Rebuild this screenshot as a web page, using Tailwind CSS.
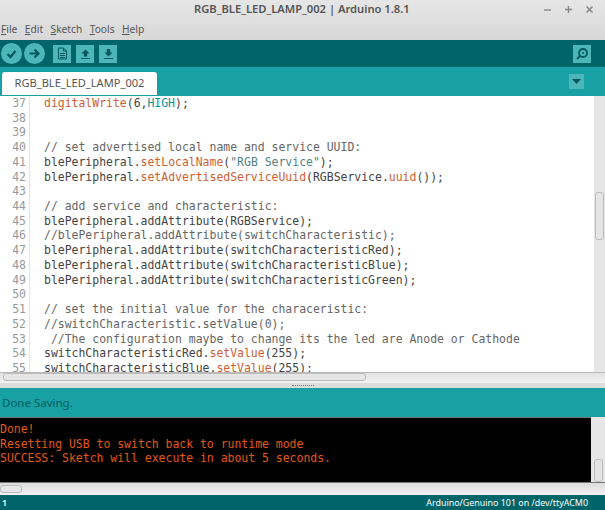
<!DOCTYPE html>
<html lang="en">
<head>
<meta charset="UTF-8">
<title>RGB_BLE_LED_LAMP_002 | Arduino 1.8.1</title>
<script src="https://cdn.jsdelivr.net/npm/@tailwindcss/browser@4"></script>
</head>
<body class="w-[605px] h-[510px] overflow-hidden bg-[#e0e0e0] font-['Noto_Sans',sans-serif]">
<div class="flex flex-col h-[510px]">

  <!-- title + menu -->
  <div class="h-[40px] bg-gradient-to-b from-[#e6e6e6] to-[#d8d8d8] shrink-0">
    <div class="h-[19px] flex items-center pl-[194px] text-[11.2px] font-semibold text-[#555]">
      <span class="w-[349px] whitespace-nowrap">RGB_BLE_LED_LAMP_002 | Arduino 1.8.1</span>
      <div class="flex gap-[12px] text-[#888]">
        <svg width="9" height="9" viewBox="0 0 9 9"><path d="M1 5h7" stroke="currentColor" stroke-width="1.4"/></svg>
        <svg width="9" height="9" viewBox="0 0 9 9"><path d="M1 4.500h7M4.500 1v7" stroke="currentColor" stroke-width="1.4"/></svg>
        <svg width="9" height="9" viewBox="0 0 9 9"><path d="M1.500 1.500l6 6M7.500 1.500l-6 6" stroke="currentColor" stroke-width="1.6"/></svg>
      </div>
    </div>
    <div class="h-[21px] flex items-center gap-[7.5px] pl-[1px] text-[10.2px] text-[#555]">
      <span><u>F</u>ile</span><span><u>E</u>dit</span><span><u>S</u>ketch</span><span><u>T</u>ools</span><span><u>H</u>elp</span>
    </div>
  </div>

  <!-- toolbar -->
  <div class="h-[27px] shrink-0 bg-[#006468] flex items-center pl-[1px] pr-[14px]">
    <div class="w-[21px] h-[21px] rounded-full bg-[#4db6b9] flex items-center justify-center">
      <svg width="13" height="13" viewBox="0 0 13 13"><path d="M2.500 7l3 3 5-6" fill="none" stroke="#00585c" stroke-width="2.2"/></svg>
    </div>
    <div class="w-[21px] h-[21px] rounded-full bg-[#4db6b9] flex items-center justify-center ml-[2px]">
      <svg width="13" height="13" viewBox="0 0 13 13"><path d="M1.500 6.500h8M6.500 2.500l4 4-4 4" fill="none" stroke="#00585c" stroke-width="2.2"/></svg>
    </div>
    <div class="w-[18px] h-[18px] bg-[#4db6b9] flex items-center justify-center ml-[8px]">
      <svg width="11" height="13" viewBox="0 0 11 13"><path d="M1.500 1h5l3 3v8h-8zM6.500 1v3h3M3 6.500h5M3 8.500h5M3 10.500h5" fill="none" stroke="#00585c" stroke-width="1"/></svg>
    </div>
    <div class="w-[18px] h-[18px] bg-[#4db6b9] flex flex-col items-center justify-center ml-[5px]">
      <svg width="11" height="11" viewBox="0 0 11 11"><path d="M5.500 1.500l4 4h-2.300v3h-3.400v-3h-2.300z" fill="#00585c"/><path d="M1 10.500h9" stroke="#00585c"/></svg>
    </div>
    <div class="w-[18px] h-[18px] bg-[#4db6b9] flex items-center justify-center ml-[5px]">
      <svg width="11" height="11" viewBox="0 0 11 11"><path d="M5.500 8.500l4-4h-2.300v-3.500h-3.400v3.500h-2.300z" fill="#00585c"/><path d="M1 10.500h9" stroke="#00585c"/></svg>
    </div>
    <div class="w-[18px] h-[18px] bg-[#4db6b9] flex items-center justify-center ml-auto">
      <svg width="14" height="14" viewBox="0 0 14 14"><circle cx="8" cy="6" r="4" fill="none" stroke="#00585c" stroke-width="1.8"/><circle cx="8" cy="6" r="1" fill="#00585c"/><path d="M5 9l-3 3" stroke="#00585c" stroke-width="2"/></svg>
    </div>
  </div>

  <!-- tabs -->
  <div class="h-[29px] shrink-0 bg-[#17a1a5] flex items-end pl-[2px] pr-[21px] pb-[1px]">
    <div class="w-[155px] h-[23px] bg-white rounded-t-[3px] flex items-center justify-center text-[11.1px] text-[#555]">RGB_BLE_LED_LAMP_002</div>
    <div class="w-[15px] h-[15px] ml-auto mb-[6px] bg-[#4db6b9] flex items-center justify-center">
      <svg width="9" height="5" viewBox="0 0 9 5"><path d="M0 0h9l-4.500 5z" fill="#00585c"/></svg>
    </div>
  </div>

  <!-- editor -->
  <div class="h-[276px] shrink-0 flex bg-white">
    <div class="w-[30px] shrink-0 border-r border-[#e4e4e4] text-right pr-[3px] font-['DejaVu_Sans_Mono',monospace] text-[11.46px] leading-[14.72px] text-[#999] overflow-hidden">
      <div>37</div><div>38</div><div>39</div><div>40</div><div>41</div><div>42</div><div>43</div><div>44</div><div>45</div><div>46</div><div>47</div><div>48</div><div>49</div><div>50</div><div>51</div><div>52</div><div>53</div><div>54</div><div>55</div>
    </div>
    <div class="flex-1 pl-[14px] font-['DejaVu_Sans_Mono',monospace] text-[11.46px] leading-[14.72px] text-[#444] overflow-hidden whitespace-nowrap">
      <div><span class="text-[#cc5f33]">digitalWrite</span>(6,<span class="text-[#00979c]">HIGH</span>);</div>
      <div>&nbsp;</div>
      <div>&nbsp;</div>
      <div class="text-[#666]">// set advertised local name and service UUID:</div>
      <div>blePeripheral.<span class="text-[#cc5f33]">setLocalName</span>(<span class="text-[#4f8285]">"RGB Service"</span>);</div>
      <div>blePeripheral.<span class="text-[#cc5f33]">setAdvertisedServiceUuid</span>(RGBService.<span class="text-[#cc5f33]">uuid</span>());</div>
      <div>&nbsp;</div>
      <div class="text-[#666]">// add service and characteristic:</div>
      <div>blePeripheral.addAttribute(RGBService);</div>
      <div class="text-[#666]">//blePeripheral.addAttribute(switchCharacteristic);</div>
      <div>blePeripheral.addAttribute(switchCharacteristicRed);</div>
      <div>blePeripheral.addAttribute(switchCharacteristicBlue);</div>
      <div>blePeripheral.addAttribute(switchCharacteristicGreen);</div>
      <div>&nbsp;</div>
      <div class="text-[#666]">// set the initial value for the characeristic:</div>
      <div class="text-[#666]">//switchCharacteristic.setValue(0);</div>
      <div class="text-[#666]">&nbsp;//The configuration maybe to change its the led are Anode or Cathode</div>
      <div>switchCharacteristicRed.<span class="text-[#cc5f33]">setValue</span>(255);</div>
      <div>switchCharacteristicBlue.<span class="text-[#cc5f33]">setValue</span>(255);</div>
    </div>
    <div class="w-[11px] shrink-0 bg-[#e6e6e6] pt-[96px] pl-[1px]">
      <div class="w-[9px] h-[48px] rounded-[3px] border border-[#bbb] bg-[#e4e4e4]"></div>
    </div>
  </div>

  <!-- horizontal scroll -->
  <div class="h-[11px] shrink-0 bg-gradient-to-b from-[#e2e2e2] to-[#f2f2f2] border-t border-[#bbb] pl-[3px] pr-[239px]">
    <div class="h-[8px] rounded-[3px] border border-[#bbb] bg-[#e6e6e6]"></div>
  </div>

  <!-- divider -->
  <div class="h-[5px] shrink-0 bg-[#dcdcdc] flex justify-center items-center">
    <div class="w-[22px] h-[1px] border-t border-dotted border-[#777]"></div>
  </div>

  <!-- status -->
  <div class="h-[29px] shrink-0 bg-[#17a1a5] flex items-center pl-[2px] pt-[1px] text-[11.5px] text-[#005c5f]">Done Saving.</div>

  <!-- console -->
  <div class="h-[65px] shrink-0 flex bg-[#e6e6e6]">
    <div class="flex-1 bg-black border-t border-[#777] pt-[4px] font-['DejaVu_Sans_Mono',monospace] text-[11.46px] leading-[14.72px] text-[#e35a10] whitespace-nowrap overflow-hidden">
      <div>Done!</div>
      <div>Resetting USB to switch back to runtime mode</div>
      <div>SUCCESS: Sketch will execute in about 5 seconds.</div>
    </div>
    <div class="w-[14px] shrink-0 pt-[42px] pl-[3px]">
      <div class="w-[9px] h-[23px] rounded-[3px] border border-[#bbb] bg-[#e4e4e4]"></div>
    </div>
  </div>

  <!-- console scroll -->
  <div class="h-[13px] shrink-0 bg-gradient-to-b from-[#dcdcdc] to-[#f2f2f2] border-t border-[#777] pt-[2px] pr-[583px]">
    <div class="h-[8px] rounded-[3px] border border-[#bbb] bg-[#e6e6e6]"></div>
  </div>

  <!-- footer -->
  <div class="flex-1 min-h-0 overflow-hidden bg-[#006468] flex items-center justify-between pl-[2px] pr-[17px] text-[8.9px] leading-[14px] text-white">
    <span class="font-semibold">1</span>
    <span>Arduino/Genuino 101 on /dev/ttyACM0</span>
  </div>
</div>
</body>
</html>
